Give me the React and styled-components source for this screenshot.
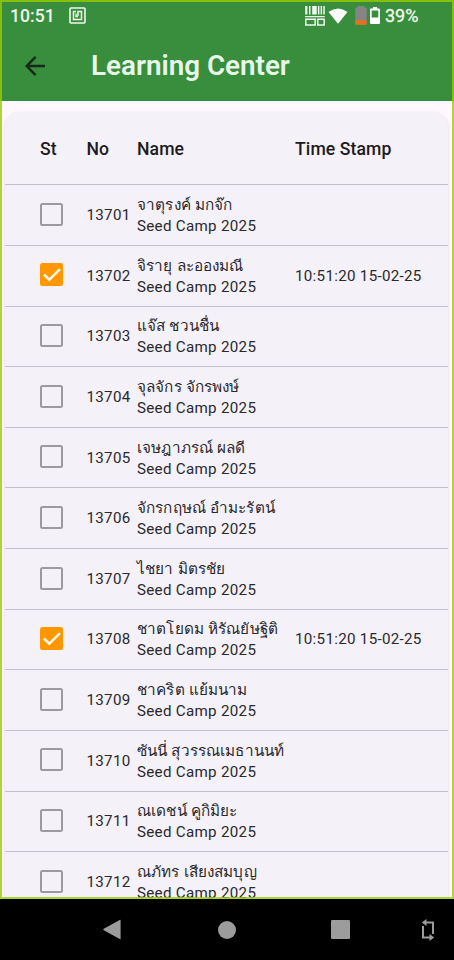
import React from "react";
import styled, { createGlobalStyle } from "styled-components";

const people = [
    { no: "13701", name: "จาตุรงค์ มกจ๊ก" },
    { no: "13702", name: "จิรายุ ละอองมณี", time: "10:51:20 15-02-25" },
    { no: "13703", name: "แจ๊ส ชวนชื่น" },
    { no: "13704", name: "จุลจักร จักรพงษ์" },
    { no: "13705", name: "เจษฎาภรณ์ ผลดี" },
    { no: "13706", name: "จักรกฤษณ์ อำมะรัตน์" },
    { no: "13707", name: "ไชยา มิตรชัย" },
    { no: "13708", name: "ชาตโยดม หิรัณยัษฐิติ", time: "10:51:20 15-02-25" },
    { no: "13709", name: "ชาคริต แย้มนาม" },
    { no: "13710", name: "ซันนี่ สุวรรณเมธานนท์" },
    { no: "13711", name: "ณเดชน์ คูกิมิยะ" },
    { no: "13712", name: "ณภัทร เสียงสมบุญ" },
];

const NfcIcon = () => (
    <svg width="17" height="17" viewBox="0 0 17 17" fill="none" stroke="#f1f8ee">
        <rect x="1" y="1" width="15" height="15" rx="1" strokeWidth="1.6"/>
        <path d="M7 4.5H4.5v8h8v-8H9v4.6" strokeWidth="1.5"/>
        <path d="M7 6.5v3h2" strokeWidth="1.3"/>
    </svg>
)

const ScannerIcon = () => (
    <svg width="20" height="20" viewBox="0 0 20 20" fill="#f1f8ee">
        <path d="M.2 0h2.2v8.6H.2zM4 0h1.5v8.6H4zM7.2 0h4.5v8.6H7.2zM12.9 0h1.5v8.6h-1.5zM15.6 0h1.5v8.6h-1.5zM18.3 0h1.5v8.6h-1.5zM0 10h19.8v1.3H0z"/>
        <path d="M.8 13.2h9.4v5.7H.8zM12.8 13.2h6.4v5.7h-6.4z" fill="none" stroke="#f1f8ee" strokeWidth="1.5"/>
    </svg>
)

const WifiIcon = () => (
    <svg width="20" height="16" viewBox="0 0 20 16">
        <path d="M.5 4Q10-3.2 19.5 4L10 15.7Z" fill="#fff"/>
    </svg>
)

const LowBatteryIcon = () => (
    <svg width="12" height="19" viewBox="0 0 12 19">
        <path d="M3 0h6v1.5h2a.7.7 0 0 1 .7.7V18a.7.7 0 0 1-.7.7H1a.7.7 0 0 1-.7-.7V2.2a.7.7 0 0 1 .7-.7h2z" fill="#858585"/>
        <path d="M.3 14.3h11.4V18a.7.7 0 0 1-.7.7H1a.7.7 0 0 1-.7-.7z" fill="#e66f20"/>
    </svg>
)

const BatteryIcon = () => (
    <svg width="10" height="17" viewBox="0 0 10 17">
        <path d="M3 0h4v1.6h2q1 0 1 1V16q0 1-1 1H1q-1 0-1-1V2.6q0-1 1-1h2zM1.7 3.5v7h6.6v-7z" fill="#fff" fillRule="evenodd"/>
    </svg>
)

const BackArrow = () => (
    <svg width="20" height="20" viewBox="0 0 20 20" fill="none" stroke="#172a19" strokeWidth="2.5">
        <path d="M20 10H1.8M10.6.9L1.7 10l8.9 9.1"/>
    </svg>
)

const CheckMark = () => (
    <svg width="18" height="14" viewBox="0 0 18 14" fill="none" stroke="#fff8ec" strokeWidth="2.5">
        <path d="M1 6.5l5.3 5.2L17 1.2"/>
    </svg>
)

const PersonRow = (props) => {
    return (
        <Row>
            <Checkbox $checked={!!props.time}>{props.time && <CheckMark/>}</Checkbox>
            <Cell>{props.no}</Cell>
            <NameCell>
                <ThaiName>{props.name}</ThaiName>
                <Camp>Seed Camp 2025</Camp>
            </NameCell>
            <Cell>{props.time}</Cell>
        </Row>
    )
}

const App = () => {
    return (
        <Phone>
            <GlobalStyle/>
            <Screen>
                <StatusBar>
                    <Clock>10:51</Clock>
                    <NfcIcon/>
                    <StatusIcons>
                        <ScannerIcon/>
                        <WifiIcon/>
                        <LowBatteryIcon/>
                        <BatteryIcon/>
                    </StatusIcons>
                    <Percent>39%</Percent>
                </StatusBar>
                <AppBar>
                    <BackArrow/>
                    <Title>Learning Center</Title>
                </AppBar>
                <Card>
                    <HeaderRow>
                        <span>St</span>
                        <span>No</span>
                        <span>Name</span>
                        <span>Time Stamp</span>
                    </HeaderRow>
                    {people.map((person) => (
                        <PersonRow key={person.no} {...person}/>
                    ))}
                </Card>
                <Frame/>
            </Screen>
            <NavBar>
                <svg width="18" height="21" viewBox="0 0 18 21"><path d="M17.6 1.3v18.4q0 .9-.9.4L.8 11.2q-1-.7 0-1.4L16.7.9q.9-.5.9.4z" fill="#9c9c9c"/></svg>
                <svg width="18" height="18" viewBox="0 0 18 18"><circle cx="9" cy="9" r="9" fill="#9c9c9c"/></svg>
                <svg width="19" height="19" viewBox="0 0 19 19"><rect width="19" height="19" rx="1.2" fill="#9c9c9c"/></svg>
                <svg width="14" height="22" viewBox="0 0 14 22" fill="none" stroke="#9c9c9c" strokeWidth="2">
                    <path d="M4 3.5h8V15M10 18.5H2V7"/>
                    <path d="M5.5 0v7L.8 3.5zM8.5 15v7l4.7-3.5z" fill="#9c9c9c" stroke="none"/>
                </svg>
            </NavBar>
        </Phone>
    )
}

const GlobalStyle = createGlobalStyle`
body {
    margin: 0;
    background: #000;
}
* {
    box-sizing: border-box;
}
svg {
    display: block;
    flex: none;
}`

const Phone = styled.div`
width: 454px;
height: 960px;
overflow: hidden;
background: #000;
font-family: Roboto, "Noto Sans", sans-serif;
color: #2b292e;`

const Screen = styled.div`
position: relative;
height: 899px;
overflow: hidden;
background: #fef7ff;`

const StatusBar = styled.div`
display: flex;
align-items: center;
height: 31px;
padding: 0 35px 0 10px;
background: #388e3c;
color: #f1f8ee;`

const Clock = styled.span`
width: 59px;
font-size: 17.6px;
font-weight: 500;
line-height: 32px;`

const StatusIcons = styled.div`
display: flex;
align-items: center;
margin-left: auto;
svg:nth-child(2) { margin-left: 3px; }
svg:nth-child(3) { margin-left: 7px; }
svg:nth-child(4) { margin-left: 3px; }`

const Percent = styled.span`
width: 34px;
margin-left: 5px;
font-size: 18px;
line-height: 32px;
-webkit-text-stroke: .3px;`

const AppBar = styled.div`
display: flex;
align-items: center;
height: 70px;
padding: 0 25px;
background: #388e3c;`

const Title = styled.h1`
margin: 0 0 0 46px;
font-size: 27.8px;
font-weight: 600;
line-height: 68px;
color: #e8f5e9;
white-space: nowrap;`

const Card = styled.div`
margin: 11px 6px 0 5px;
height: 900px;
border-radius: 15px 15px 0 0;
background: #f5f1f8;
box-shadow: 0 1px 3px rgba(0, 0, 0, .15);`

const HeaderRow = styled.div`
display: grid;
grid-template-columns: 46.5px 50.5px 158px 1fr;
align-items: center;
height: 72.3px;
padding: 2px 0 0 35px;
font-size: 17.6px;
font-weight: 500;
letter-spacing: .1px;
line-height: 24px;
color: #1d1b20;`

const Row = styled.div`
display: grid;
grid-template-columns: 46.5px 50.5px 158px 1fr;
align-items: center;
height: 60.64px;
padding-left: 35px;
border-top: 1px solid #c4bfca;`

const Checkbox = styled.div`
display: flex;
align-items: center;
justify-content: center;
width: 23px;
height: 23px;
margin-bottom: 1.5px;
border: ${(props) => (props.$checked ? "none" : "2px solid #9c9a9f")};
border-radius: 2.5px;
background: ${(props) => (props.$checked ? "#ff9800" : "transparent")};`

const Cell = styled.span`
font-size: 15.15px;
letter-spacing: .3px;
white-space: nowrap;`

const NameCell = styled.div`
line-height: 22px;
white-space: nowrap;`

const ThaiName = styled.div`
height: 22px;
padding-top: 1px;
font-size: 15.3px;
letter-spacing: .15px;`

const Camp = styled.div`
height: 22px;
font-size: 15.15px;
letter-spacing: .3px;`

const Frame = styled.div`
position: absolute;
inset: 0;
border: 2px solid rgba(153, 204, 0, .8);
pointer-events: none;`

const NavBar = styled.div`
display: grid;
grid-template-columns: 115px 113px 90px 1fr;
align-items: center;
height: 61px;
padding-left: 103px;
background: #000;`

export default App;
